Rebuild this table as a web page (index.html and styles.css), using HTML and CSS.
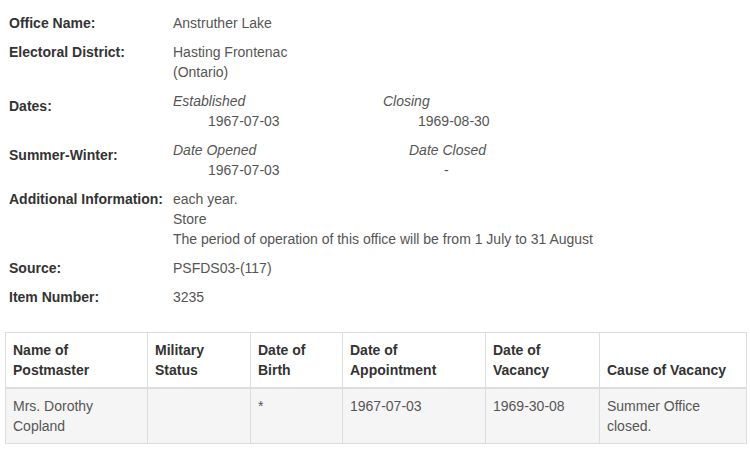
FILE: index.html
```html
<!DOCTYPE html>
<html lang="en">
<head>
    <meta charset="UTF-8">
    <title>Anstruther Lake</title>
    <link rel="stylesheet" href="styles.css">
</head>
<body>
    <div class="container">
        <div class="details">
            <div class="row">
                <div class="label">Office Name:</div>
                <div class="value">Anstruther Lake</div>
            </div>
            <div class="row">
                <div class="label">Electoral District:</div>
                <div class="value">Hasting Frontenac<br>(Ontario)</div>
            </div>
            <div class="row">
                <div class="label label-dates">Dates:</div>
                <div class="value dates dates-main">
                    <div class="date-col">
                        <em>Established</em>
                        <div class="date">1967-07-03</div>
                    </div>
                    <div class="date-col">
                        <em>Closing</em>
                        <div class="date">1969-08-30</div>
                    </div>
                </div>
            </div>
            <div class="row">
                <div class="label label-dates">Summer-Winter:</div>
                <div class="value dates dates-season">
                    <div class="date-col">
                        <em>Date Opened</em>
                        <div class="date">1967-07-03</div>
                    </div>
                    <div class="date-col">
                        <em>Date Closed</em>
                        <div class="date">-</div>
                    </div>
                </div>
            </div>
            <div class="row">
                <div class="label">Additional Information:</div>
                <div class="value">each year.<br>Store<br>The period of operation of this office will be from 1 July to 31 August</div>
            </div>
            <div class="row">
                <div class="label">Source:</div>
                <div class="value">PSFDS03-(117)</div>
            </div>
            <div class="row">
                <div class="label">Item Number:</div>
                <div class="value">3235</div>
            </div>
        </div>

        <table class="postmasters">
            <colgroup>
                <col style="width: 142px">
                <col style="width: 103px">
                <col style="width: 92px">
                <col style="width: 143px">
                <col style="width: 114px">
                <col>
            </colgroup>
            <thead>
                <tr>
                    <th>Name of Postmaster</th>
                    <th>Military Status</th>
                    <th>Date of Birth</th>
                    <th>Date of Appointment</th>
                    <th>Date of Vacancy</th>
                    <th>Cause of Vacancy</th>
                </tr>
            </thead>
            <tbody>
                <tr>
                    <td>Mrs. Dorothy Copland</td>
                    <td></td>
                    <td>*</td>
                    <td>1967-07-03</td>
                    <td>1969-30-08</td>
                    <td>Summer Office closed.</td>
                </tr>
            </tbody>
        </table>
    </div>
</body>
</html>
```

FILE: styles.css
```css
body {
    margin: 0;
    font-family: 'Liberation Sans', Arial, sans-serif;
    font-size: 14px;
    line-height: 20px;
    color: #333;
    background-color: white;
}
.container {
    padding: 13px 3px 0 5px;
}
.details {
    padding-left: 4px;
}
.row {
    display: grid;
    grid-template-columns: 164px 1fr;
    margin-bottom: 9px;
}
.label {
    font-weight: bold;
    color: #333;
}
.label-dates {
    padding-top: 5px;
}
.value {
    color: #555;
}
.dates {
    display: flex;
}
.dates-main .date-col:first-child {
    width: 210px;
}
.dates-season .date-col:first-child {
    width: 236px;
}
.date-col em {
    display: block;
}
.date {
    padding-left: 35px;
}
.postmasters {
    width: 742px;
    margin-top: 25px;
    border-collapse: collapse;
    border: 1px solid #ddd;
    table-layout: fixed;
}
.postmasters th,
.postmasters td {
    padding: 7px;
    border: 1px solid #ddd;
    text-align: left;
    vertical-align: bottom;
}
.postmasters th {
    border-bottom-width: 2px;
    color: #333;
}
.postmasters td {
    vertical-align: top;
    color: #555;
}
.postmasters tbody tr {
    background-color: #f5f5f5;
}
```
